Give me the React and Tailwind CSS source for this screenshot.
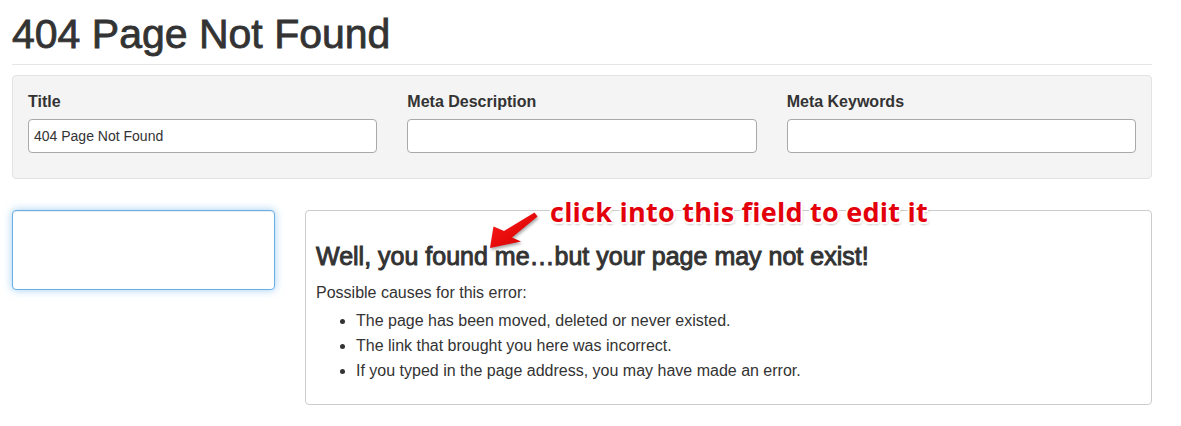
import React from "react";

const fields = [
  { label: "Title", value: "404 Page Not Found" },
  { label: "Meta Description", value: "" },
  { label: "Meta Keywords", value: "" },
];

const causes = [
  "The page has been moved, deleted or never existed.",
  "The link that brought you here was incorrect.",
  "If you typed in the page address, you may have made an error.",
];

function Callout() {
  return (
    <>
      <svg
        className="absolute left-[180px] top-0 w-[60px] h-[42px] overflow-visible drop-shadow-[1px_2px_1.5px_rgba(0,0,0,0.35)]"
        viewBox="180 0 60 42"
      >
        <defs>
          <linearGradient id="arrowRed" x1="0" y1="0" x2="1" y2="1">
            <stop offset="0" stopColor="#ff1a1a" />
            <stop offset="1" stopColor="#d10000" />
          </linearGradient>
        </defs>
        <polygon
          points="184,37 187.5,15.5 198,20 228.5,1.5 231.5,5.5 206,26.5 215,30.5"
          fill="url(#arrowRed)"
        />
      </svg>
      <div className="absolute left-[244px] top-[-13px] whitespace-nowrap font-['Open_Sans',sans-serif] font-bold text-[27px] leading-[27px] tracking-[0.25px] text-[#e3000b] [text-shadow:2px_0_#fff,-2px_0_#fff,0_2px_#fff,0_-2px_#fff,1.5px_1.5px_#fff,-1.5px_1.5px_#fff,1.5px_-1.5px_#fff,-1.5px_-1.5px_#fff,1px_2px_3px_rgba(0,0,0,0.45)]">
        click into this field to edit it
      </div>
    </>
  );
}

export default function App() {
  return (
    <div className="min-h-[426px] bg-white px-3 font-['Liberation_Sans',Arial,sans-serif] text-[#333]">
      <div className="w-[1140px]">
        <h1 className="pt-3 text-[41px] leading-[44px] [-webkit-text-stroke:0.8px_#333]">404 Page Not Found</h1>
        <hr className="mt-2 border-t border-[#e5e5e5]" />

        <div className="mt-[10px] grid grid-cols-3 gap-x-[30px] rounded border border-[#e3e3e3] bg-[#f4f4f4] px-[15px] pt-[15px] pb-[25px]">
          {fields.map((f) => (
            <div key={f.label}>
              <label className="block mb-[6px] text-base font-bold leading-[22px]">{f.label}</label>
              <input
                type="text"
                defaultValue={f.value}
                className="block h-[34px] w-full rounded border border-[#a9a9a9] bg-white px-[5px] text-sm text-[#333] outline-none"
              />
            </div>
          ))}
        </div>

        <div className="mt-[31px] flex items-start gap-[30px]">
          <div className="h-[80px] w-[263px] shrink-0 rounded border border-[#66afe9] bg-white shadow-[inset_0_1px_1px_rgba(0,0,0,0.075),0_0_8px_rgba(102,175,233,0.6)]" />

          <div className="relative h-[195px] flex-1 rounded border border-[#ccc] pl-[10px] pt-[32px]">
            <Callout />
            <h3 className="text-[25px] leading-[26px] [-webkit-text-stroke:0.95px_#333]">
              Well, you found me…but your page may not exist!
            </h3>
            <p className="mt-[13px] text-base leading-[22px]">Possible causes for this error:</p>
            <ul className="mt-[4px] list-disc pl-[40px] text-base leading-[25px]">
              {causes.map((c) => (
                <li key={c}>{c}</li>
              ))}
            </ul>
          </div>
        </div>
      </div>
    </div>
  );
}
